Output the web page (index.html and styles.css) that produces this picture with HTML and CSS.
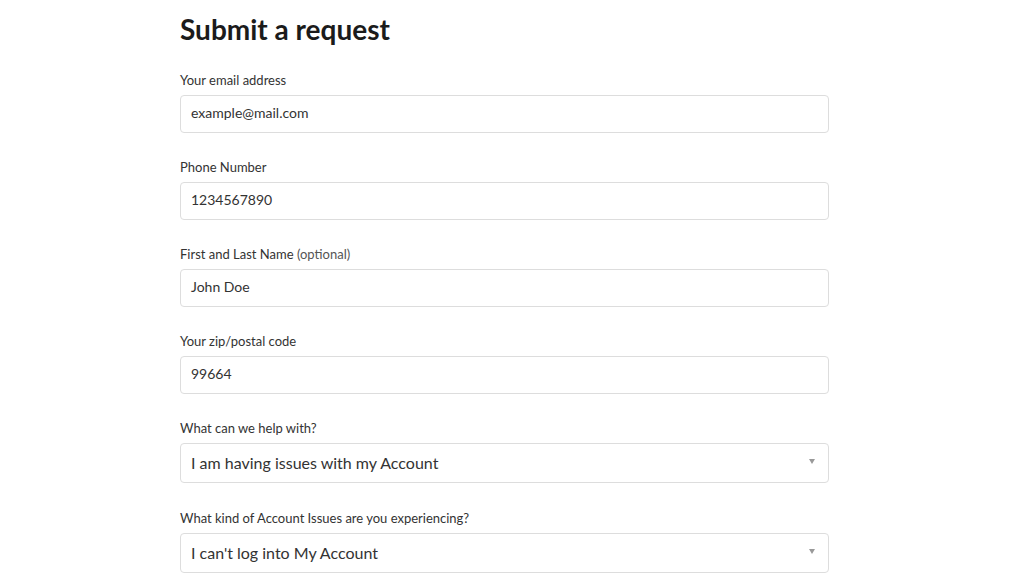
FILE: index.html
```html
<!DOCTYPE html>
<html lang="en">
<head>
<meta charset="utf-8">
<title>Submit a request</title>
<link rel="stylesheet" href="styles.css">
</head>
<body>
<main class="page">
  <h1 class="title">Submit a request</h1>
  <form class="form">
    <div class="field">
      <label class="label">Your email address</label>
      <div class="input">example@mail.com</div>
    </div>
    <div class="field">
      <label class="label">Phone Number</label>
      <div class="input">1234567890</div>
    </div>
    <div class="field">
      <label class="label">First and Last Name <span class="optional">(optional)</span></label>
      <div class="input">John Doe</div>
    </div>
    <div class="field">
      <label class="label">Your zip/postal code</label>
      <div class="input">99664</div>
    </div>
    <div class="field field-select">
      <label class="label">What can we help with?</label>
      <div class="select"><span>I am having issues with my Account</span><span class="arrow"></span></div>
    </div>
    <div class="field field-select">
      <label class="label">What kind of Account Issues are you experiencing?</label>
      <div class="select"><span>I can't log into My Account</span><span class="arrow"></span></div>
    </div>
  </form>
</main>
</body>
</html>
```
FILE: styles.css
```css
html, body {
  margin: 0;
  padding: 0;
  background: #ffffff;
}
body {
  font-family: Lato, "Open Sans", "Liberation Sans", sans-serif;
  color: #2f3941;
}
.page {
  padding-left: 180px;
  width: 649px;
}
.title {
  margin: 12px 0 25px 0;
  font-size: 28px;
  line-height: 34px;
  font-weight: 700;
  color: #1b1b1b;
}
.form {
  display: flex;
  flex-direction: column;
  gap: 25px;
}
.field {
  display: flex;
  flex-direction: column;
  gap: 6px;
}
.label {
  font-size: 13px;
  line-height: 18px;
  color: #333333;
}
.optional {
  color: #555555;
}
.input {
  box-sizing: border-box;
  height: 38px;
  border: 1px solid #dddddd;
  border-radius: 4px;
  padding: 0 10px 3px 10px;
  display: flex;
  align-items: center;
  font-size: 14px;
  color: #333333;
}
.field-select + .field-select {
  margin-top: 1px;
}
.select {
  box-sizing: border-box;
  height: 40px;
  border: 1px solid #dddddd;
  border-radius: 4px;
  padding: 0 13px 2px 10px;
  display: flex;
  align-items: center;
  justify-content: space-between;
  font-size: 16px;
  color: #333333;
}
.arrow {
  width: 0;
  height: 0;
  border-left: 3px solid transparent;
  border-right: 3px solid transparent;
  border-top: 5px solid #999999;
  margin-top: -2px;
}
```
